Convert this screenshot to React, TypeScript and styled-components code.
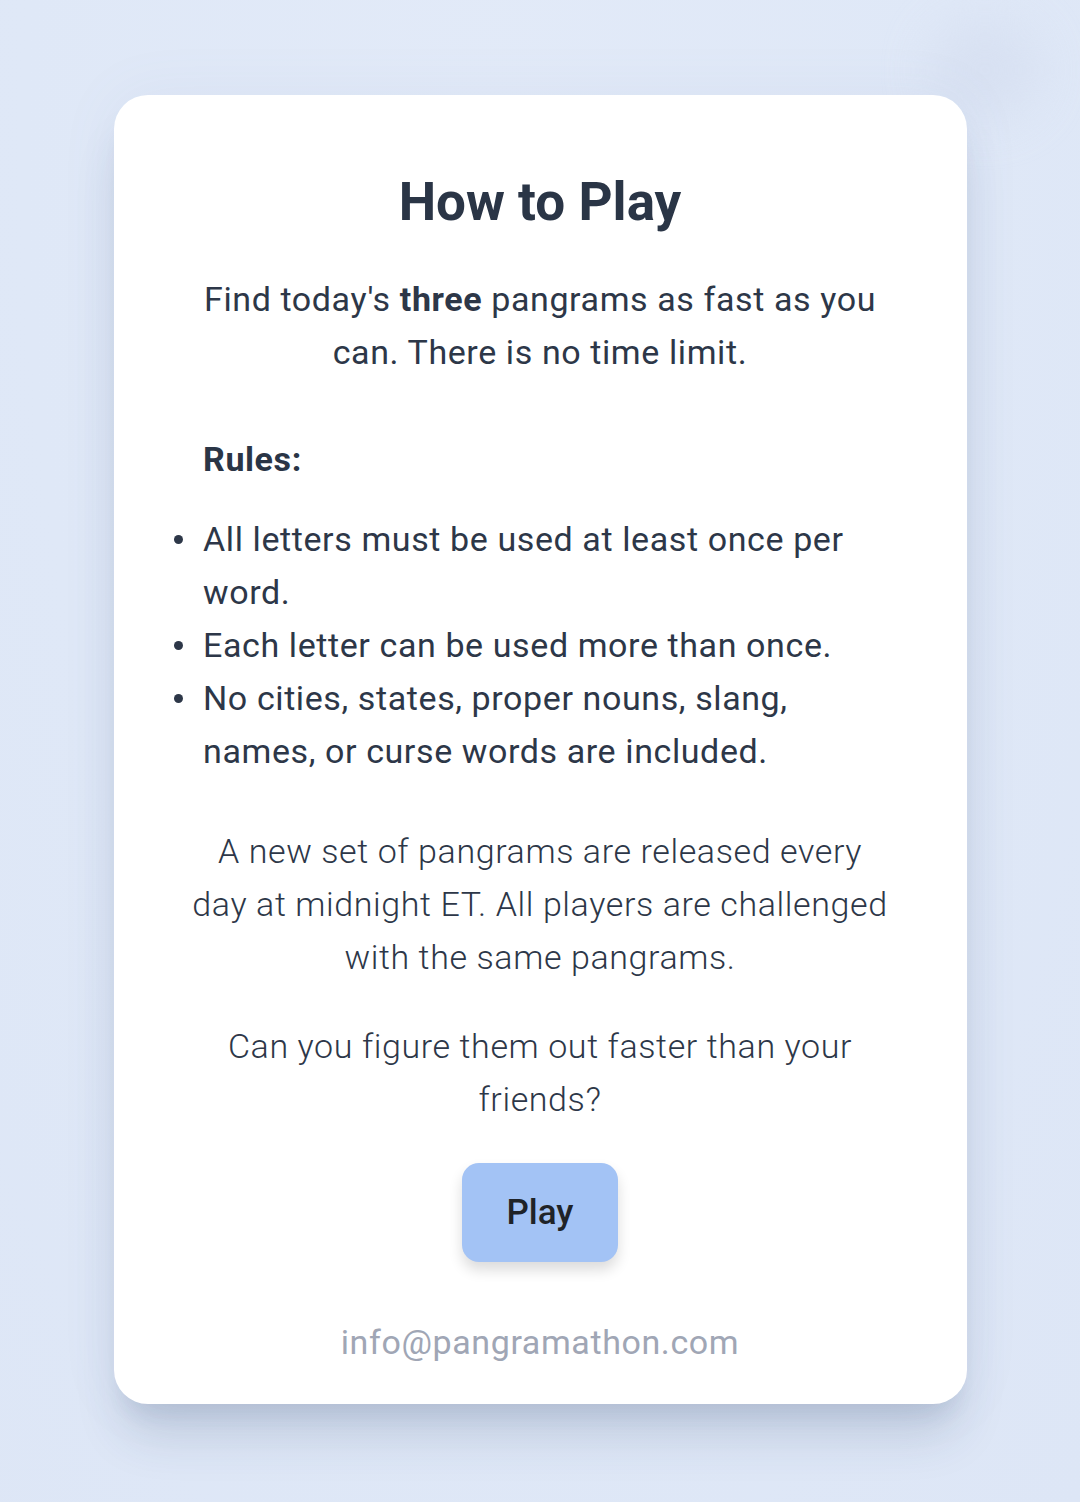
import styled, { createGlobalStyle } from "styled-components";

const GlobalStyle = createGlobalStyle`
  html, body {
    margin: 0;
    padding: 0;
    background: #dfe8f7;
  }
  body {
    font-family: Roboto, "Noto Sans", "Liberation Sans", sans-serif;
    -webkit-font-smoothing: antialiased;
  }
`;

const Page = styled.main`
  position: relative;
  min-height: 100vh;
  box-sizing: border-box;
  padding-top: 95px;
  overflow: hidden;
  background: radial-gradient(ellipse at 45% 10%, #e2eaf8 0%, #dfe8f7 55%, #dde6f6 100%);
`;

const Blob = styled.div`
  position: absolute;
  top: 20px;
  right: 40px;
  width: 110px;
  height: 100px;
  border-radius: 50%;
  background: #d5def0;
  filter: blur(24px);
  opacity: 0.7;
`;

const Card = styled.section`
  position: relative;
  width: 853px;
  margin: 0 auto;
  box-sizing: border-box;
  padding: 75px 74.5px 35px;
  background: #ffffff;
  border-radius: 34px;
  box-shadow: 0 40px 50px -10px rgba(40, 60, 100, 0.16), 0 20px 20px -10px rgba(40, 60, 100, 0.08),
    0 0 60px rgba(110, 130, 170, 0.07);
  display: flex;
  flex-direction: column;
  align-items: center;
  color: #2d3748;
`;

const Title = styled.h1`
  margin: 0 0 39px;
  font-size: 53px;
  line-height: 64px;
  font-weight: 700;
  color: #2a3546;
`;

const Text = styled.p<{ $light?: boolean; $gap: number }>`
  margin: 0 0 ${(p) => p.$gap}px;
  width: 100%;
  font-size: 34px;
  letter-spacing: 0.6px;
  line-height: 53px;
  font-weight: ${(p) => (p.$light ? 300 : 400)};
  text-align: center;
  color: #2d3748;
`;

const Rules = styled.div`
  align-self: stretch;
  padding-left: 15px;
  margin-bottom: 47px;
`;

const RulesHeading = styled.h2`
  margin: 0 0 27px;
  font-size: 34px;
  letter-spacing: 0.6px;
  line-height: 53px;
  font-weight: 700;
  color: #2a3546;
`;

const RuleList = styled.ul`
  list-style: none;
  margin: 0;
  padding: 0;
`;

const RuleItem = styled.li`
  position: relative;
  font-size: 34px;
  letter-spacing: 0.6px;
  line-height: 53px;
  color: #2d3748;

  &::before {
    content: "";
    position: absolute;
    left: -29px;
    top: 22px;
    width: 9px;
    height: 9px;
    border-radius: 50%;
    background: #2d3748;
  }
`;

const PlayButton = styled.button`
  height: 99px;
  padding: 0 44px;
  margin-bottom: 54px;
  border: none;
  border-radius: 17px;
  background: #a3c3f5;
  color: #1f2328;
  font-family: inherit;
  font-size: 35px;
  font-weight: 500;
  box-shadow: 0 8px 14px rgba(0, 0, 0, 0.14);
  cursor: pointer;
`;

const Email = styled.a`
  font-size: 34px;
  letter-spacing: 0.6px;
  line-height: 53px;
  color: #a0a6b5;
  text-decoration: none;
`;

const rules = [
  "All letters must be used at least once per word.",
  "Each letter can be used more than once.",
  "No cities, states, proper nouns, slang, names, or curse words are included.",
];

const App = () => {
  return (
    <Page>
      <GlobalStyle />
      <Blob />
      <Card>
        <Title>How to Play</Title>
        <Text $gap={54}>
          Find today's <strong>three</strong> pangrams as fast as you can. There is no time limit.
        </Text>
        <Rules>
          <RulesHeading>Rules:</RulesHeading>
          <RuleList>
            {rules.map((rule) => (
              <RuleItem key={rule}>{rule}</RuleItem>
            ))}
          </RuleList>
        </Rules>
        <Text $light $gap={36}>
          A new set of pangrams are released every day at midnight ET. All players are challenged
          with the same pangrams.
        </Text>
        <Text $light $gap={37}>
          Can you figure them out faster than your friends?
        </Text>
        <PlayButton>Play</PlayButton>
        <Email href="mailto:info@pangramathon.com">info@pangramathon.com</Email>
      </Card>
    </Page>
  );
};

export default App;
